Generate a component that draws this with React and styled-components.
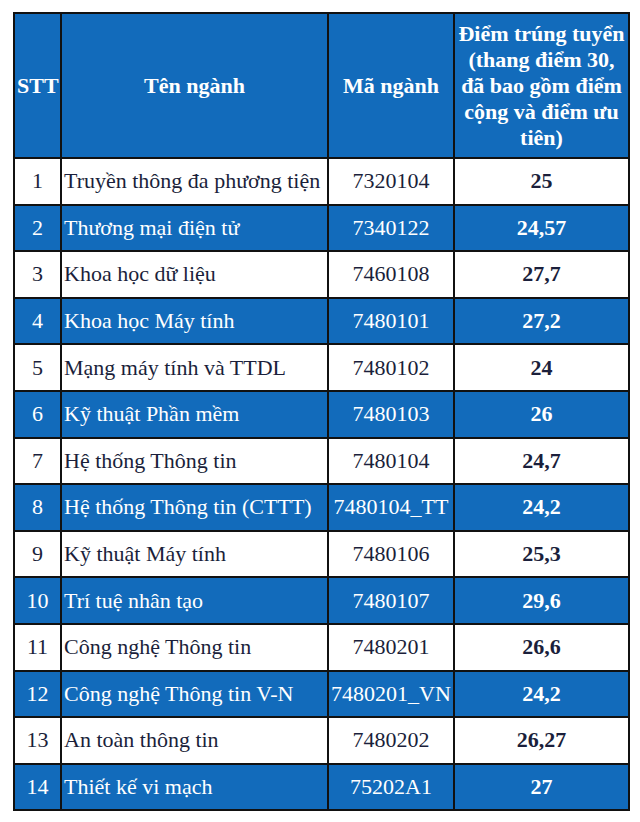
import React from 'react';
import styled, { createGlobalStyle } from 'styled-components';

const GlobalStyle = createGlobalStyle`
  html, body {
    margin: 0;
    padding: 0;
    background: #ffffff;
  }
`;

const Page = styled.div`
  width: 640px;
  height: 822px;
  padding: 12px 0 0 13px;
  box-sizing: border-box;
  background: #fff;
`;

const Table = styled.table`
  border-collapse: collapse;
  table-layout: fixed;
  width: 615px;
  font-family: 'Liberation Serif', 'Times New Roman', serif;
  border: 2px solid #111;
`;

const HeadCell = styled.th`
  background: #126bbb;
  color: #fff;
  font-weight: 700;
  font-size: 22px;
  line-height: 26px;
  height: 143px;
  padding: 0 2px;
  text-align: center;
  vertical-align: middle;
  border: 2px solid #111;
`;

const Row = styled.tr`
  background: ${p => (p.$blue ? '#126bbb' : '#ffffff')};
  color: ${p => (p.$blue ? '#ffffff' : '#1b1f3b')};
`;

const Cell = styled.td`
  height: 44.6px;
  padding: 0 2px;
  font-size: 22px;
  font-weight: ${p => (p.$bold ? 700 : 400)};
  text-align: ${p => p.$align || 'center'};
  vertical-align: middle;
  white-space: nowrap;
  overflow: hidden;
  border: 2px solid #111;
`;

const ROWS = [
  ['1', 'Truyền thông đa phương tiện', '7320104', '25'],
  ['2', 'Thương mại điện tử', '7340122', '24,57'],
  ['3', 'Khoa học dữ liệu', '7460108', '27,7'],
  ['4', 'Khoa học Máy tính', '7480101', '27,2'],
  ['5', 'Mạng máy tính và TTDL', '7480102', '24'],
  ['6', 'Kỹ thuật Phần mềm', '7480103', '26'],
  ['7', 'Hệ thống Thông tin', '7480104', '24,7'],
  ['8', 'Hệ thống Thông tin (CTTT)', '7480104_TT', '24,2'],
  ['9', 'Kỹ thuật Máy tính', '7480106', '25,3'],
  ['10', 'Trí tuệ nhân tạo', '7480107', '29,6'],
  ['11', 'Công nghệ Thông tin', '7480201', '26,6'],
  ['12', 'Công nghệ Thông tin V-N', '7480201_VN', '24,2'],
  ['13', 'An toàn thông tin', '7480202', '26,27'],
  ['14', 'Thiết kế vi mạch', '75202A1', '27'],
];

const App = () => (
  <Page>
    <GlobalStyle />
    <Table>
      <colgroup>
        <col style={{ width: 47 }} />
        <col style={{ width: 267 }} />
        <col style={{ width: 126 }} />
        <col style={{ width: 175 }} />
      </colgroup>
      <thead>
        <tr>
          <HeadCell>STT</HeadCell>
          <HeadCell>Tên ngành</HeadCell>
          <HeadCell>Mã ngành</HeadCell>
          <HeadCell>
            Điểm trúng tuyển (thang điểm 30, đã bao gồm điểm cộng và điểm ưu tiên)
          </HeadCell>
        </tr>
      </thead>
      <tbody>
        {ROWS.map(([stt, name, code, score], i) => (
          <Row key={stt} $blue={i % 2 === 1}>
            <Cell>{stt}</Cell>
            <Cell $align="left">{name}</Cell>
            <Cell>{code}</Cell>
            <Cell $bold>{score}</Cell>
          </Row>
        ))}
      </tbody>
    </Table>
  </Page>
);

export default App;
